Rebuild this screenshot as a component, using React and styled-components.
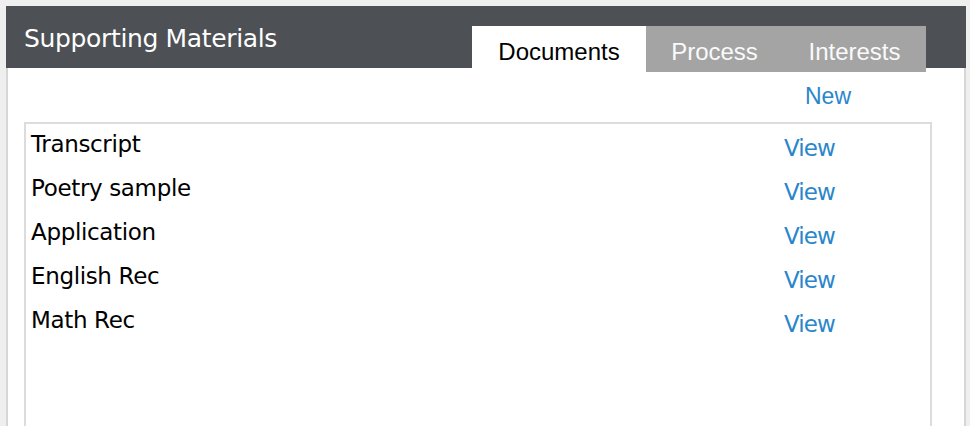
import React from "react"
import styled, { createGlobalStyle } from "styled-components"

const GlobalStyle = createGlobalStyle`
  body {
    margin: 0;
    background: #efefef;
    font-family: "DejaVu Sans", Verdana, sans-serif;
  }
`

const documents = [
  "Transcript",
  "Poetry sample",
  "Application",
  "English Rec",
  "Math Rec",
]

const tabs = [
  { label: "Documents", width: 174, active: true },
  { label: "Process", width: 137 },
  { label: "Interests", width: 143 },
]

const App = () => (
  <>
    <GlobalStyle />
    <Panel>
      <Header>
        <Title>Supporting Materials</Title>
        <Tabs>
          {tabs.map(tab => (
            <Tab key={tab.label} $active={tab.active} $width={tab.width}>
              {tab.label}
            </Tab>
          ))}
        </Tabs>
      </Header>
      <Body>
        <Toolbar>
          <NewLink href="#">New</NewLink>
        </Toolbar>
        <DocList>
          {documents.map(name => (
            <DocRow key={name}>
              <DocName>{name}</DocName>
              <ViewLink href="#">View</ViewLink>
            </DocRow>
          ))}
        </DocList>
      </Body>
    </Panel>
  </>
)

export default App

const Panel = styled.div`
  margin: 6px 0 0 6px;
  width: 960px;
  display: flex;
  flex-direction: column;
`

const Header = styled.div`
  height: 62px;
  background: #4d5055;
  display: flex;
  justify-content: space-between;
  align-items: flex-end;
  padding: 0 40px 0 18px;
`

const Title = styled.h2`
  align-self: flex-start;
  margin: 18px 0 0;
  font-size: 25px;
  font-weight: normal;
  color: #fff;
  letter-spacing: -0.35px;
`

const Tabs = styled.div`
  display: flex;
  margin-bottom: -4px;
  position: relative;
  z-index: 1;
`

const Tab = styled.div`
  width: ${p => p.$width}px;
  height: 46px;
  box-sizing: border-box;
  padding-top: 12px;
  text-align: center;
  font-family: "Liberation Sans", Arial, sans-serif;
  font-size: 24px;
  color: ${p => (p.$active ? "#000" : "#fafafa")};
  background: ${p => (p.$active ? "#fff" : "#a4a4a4")};
`

const Body = styled.div`
  background: #fff;
  border-left: 2px solid #d6d6d6;
  border-right: 2px solid #d6d6d6;
  height: 400px;
  padding: 0 32px 0 16px;
`

const Toolbar = styled.div`
  height: 54px;
  display: flex;
  justify-content: flex-end;
  padding: 15px 81px 0 0;
  box-sizing: border-box;
`

const NewLink = styled.a`
  font-family: "Liberation Sans", Arial, sans-serif;
  font-size: 23px;
  color: #2a86cb;
  text-decoration: none;
`

const DocList = styled.div`
  border: 2px solid #dcdcdc;
  height: 340px;
  padding: 7px 0 0 5px;
`

const DocRow = styled.div`
  display: grid;
  grid-template-columns: 753px 1fr;
  height: 44px;
  align-items: start;
`

const DocName = styled.span`
  font-size: 23px;
  letter-spacing: -0.35px;
  color: #000;
`

const ViewLink = styled.a`
  margin-top: 4px;
  font-size: 23px;
  letter-spacing: -0.9px;
  color: #2a86cb;
  text-decoration: none;
`
